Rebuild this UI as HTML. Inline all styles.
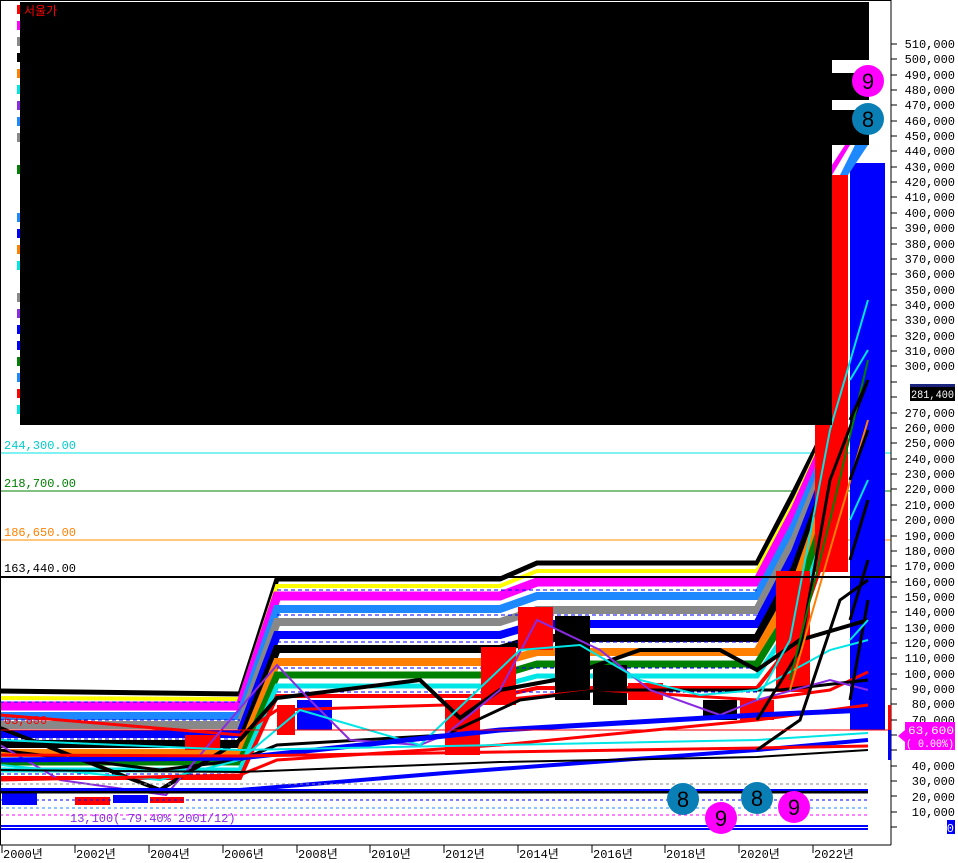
<!DOCTYPE html>
<html><head><meta charset="utf-8"><style>
html,body{margin:0;padding:0;background:#fff;width:958px;height:863px;overflow:hidden}
svg{display:block}
text{font-family:"Liberation Mono","Noto Sans CJK KR",monospace;font-size:12px}
.c{font-family:"Liberation Sans",sans-serif;font-size:22px;text-anchor:middle}
.s{font-size:11px}
</style></head><body>
<svg width="958" height="863" viewBox="0 0 958 863" xmlns="http://www.w3.org/2000/svg">
<rect width="958" height="863" fill="#fff"/>
<line x1="0" y1="453" x2="891" y2="453" stroke="#00e5e5" stroke-width="1"/>
<line x1="0" y1="491" x2="891" y2="491" stroke="#008000" stroke-width="1"/>
<line x1="0" y1="540" x2="891" y2="540" stroke="#ff8c00" stroke-width="1"/>
<text x="4" y="449" fill="#00cccc">244,300.00</text>
<text x="4" y="487" fill="#008000">218,700.00</text>
<text x="4" y="536" fill="#ff8000">186,650.00</text>
<text x="4" y="572" fill="#000">163,440.00</text>

<g fill="none" stroke-linejoin="miter">
<path d="M0,691 L240,694 L277,579 L500,579 L537,563 L757,563 L795,490 L830,420" stroke="#000" stroke-width="5"/>
<path d="M0,698 L240,699 L277,586 L500,586 L537,571 L757,571 L795,500 L830,425" stroke="#ffff00" stroke-width="4"/>
<path d="M0,706 L240,706 L277,596 L500,596 L537,582 L757,582 L795,510 L830,432" stroke="#ff00ff" stroke-width="9"/>
<path d="M0,716 L240,716 L277,609 L500,609 L537,596 L757,596 L795,524 L830,442" stroke="#1e88ff" stroke-width="8"/>
<path d="M0,725 L240,725 L277,622 L500,622 L537,610 L757,610 L795,538 L830,452" stroke="#888" stroke-width="8"/>
<path d="M0,734 L240,734 L277,635 L500,635 L537,624 L757,624 L795,552 L830,462" stroke="#0000ff" stroke-width="8"/>
<path d="M0,744 L240,744 L277,649 L500,649 L537,638 L757,638 L795,568 L830,472" stroke="#000" stroke-width="8"/>
<path d="M0,753 L240,753 L277,662 L500,662 L537,652 L757,652 L795,585 L830,485" stroke="#ff8000" stroke-width="8"/>
<path d="M0,762 L240,762 L277,675 L500,675 L537,664 L757,664 L795,603 L830,500" stroke="#008000" stroke-width="7"/>
<path d="M0,770 L240,770 L277,686 L500,686 L537,676 L757,676 L795,620 L830,520" stroke="#00e5e5" stroke-width="5"/>
<path d="M0,778 L240,778 L277,696 L500,696 L537,688 L757,688 L795,640 L830,540" stroke="#ff0000" stroke-width="4"/>
</g>
<g stroke="#0000ff" stroke-width="1" stroke-dasharray="4,3">
<line x1="0" y1="702" x2="240" y2="702"/><line x1="277" y1="590" x2="757" y2="590"/>
<line x1="0" y1="720" x2="240" y2="720"/><line x1="277" y1="615" x2="757" y2="615"/>
<line x1="0" y1="739" x2="240" y2="739"/><line x1="277" y1="642" x2="757" y2="642"/>
<line x1="0" y1="758" x2="240" y2="758"/><line x1="277" y1="668" x2="757" y2="668"/>
<line x1="0" y1="774" x2="240" y2="774"/><line x1="277" y1="692" x2="757" y2="692"/>
</g>
<g>
<rect x="2" y="790" width="35" height="15" fill="#0000ff"/>
<rect x="75" y="797" width="35" height="8" fill="#ff0000"/>
<rect x="113" y="795" width="35" height="8" fill="#0000ff"/>
<rect x="150" y="797" width="34" height="6" fill="#ff0000"/>
<rect x="185" y="735" width="35" height="15" fill="#ff0000"/>
<rect x="277" y="705" width="18" height="30" fill="#ff0000"/>
<rect x="297" y="700" width="35" height="30" fill="#0000ff"/>
<rect x="445" y="700" width="35" height="55" fill="#ff0000"/>
<rect x="481" y="647" width="35" height="58" fill="#ff0000"/>
<rect x="518" y="607" width="35" height="43" fill="#ff0000"/>
<rect x="555" y="616" width="35" height="84" fill="#000"/>
<rect x="593" y="665" width="34" height="40" fill="#000"/>
<rect x="628" y="683" width="35" height="17" fill="#ff0000"/>
<rect x="703" y="700" width="34" height="20" fill="#000"/>
<rect x="740" y="700" width="34" height="20" fill="#ff0000"/>
<rect x="776" y="571" width="34" height="121" fill="#ff0000"/>
<rect x="815" y="175" width="33" height="397" fill="#ff0000"/>
<rect x="850" y="163" width="35" height="567" fill="#0000ff"/>
</g>
<g fill="none">
<path d="M0,715 L240,735 L277,710 L445,705 L500,700 L600,690 L757,700 L830,690 L868,672" stroke="#ff0000" stroke-width="3"/>
<path d="M0,728 L160,790 L240,740 L277,698 L420,680 L460,718 L500,690 L555,680 L640,650 L720,650 L757,670 L800,640 L868,620" stroke="#000" stroke-width="4"/>
<path d="M0,750 L160,770 L240,760 L277,745 L445,735 L520,700 L600,690 L700,690 L780,690 L868,680" stroke="#000" stroke-width="3"/>
<path d="M0,745 L60,780 L166,795 L277,665 L310,700 L350,740 L420,745 L445,735 L500,690 L537,620 L600,650 L650,690 L720,715 L757,700 L830,680 L868,690" stroke="#8a2be2" stroke-width="2"/>
<path d="M0,765 L160,780 L240,760 L300,710 L420,745 L520,650 L580,645 L640,680 L700,695 L757,690 L830,650 L868,640" stroke="#00e5e5" stroke-width="2"/>
<path d="M0,780 L240,775 L277,760 L500,745 L757,720 L868,705" stroke="#ff0000" stroke-width="3"/>
<path d="M0,790 L240,790 L445,773 L757,750 L868,740" stroke="#0000ff" stroke-width="4"/>
<path d="M0,760 L240,758 L500,730 L757,715 L868,710" stroke="#0000ff" stroke-width="5"/>
<path d="M0,740 L240,750 L500,745 L757,740 L868,733" stroke="#00e5e5" stroke-width="2"/>
<path d="M0,755 L240,756 L500,752 L757,748 L868,746" stroke="#ff0000" stroke-width="3"/>
<path d="M0,770 L240,772 L500,762 L757,757 L868,750" stroke="#000" stroke-width="2"/>
<path d="M757,750 L800,720 L840,600 L868,580" stroke="#000" stroke-width="3"/>
<path d="M757,720 L800,650 L830,480 L868,380" stroke="#000" stroke-width="3"/>
<path d="M757,700 L790,640 L830,430 L868,300" stroke="#00e5e5" stroke-width="2"/>
<path d="M790,690 L830,550 L868,420" stroke="#ff8000" stroke-width="2"/>
<path d="M790,680 L830,520 L868,360" stroke="#008000" stroke-width="2"/>
<path d="M850,700 L868,600 M850,620 L868,560 M850,560 L868,500 M850,480 L868,430 M850,420 L868,380" stroke="#000" stroke-width="3"/>
<path d="M850,640 L868,620 M850,520 L868,480 M850,380 L868,350" stroke="#00e5e5" stroke-width="2"/>
</g>
<g stroke-width="1" stroke-dasharray="3,3">
<line x1="0" y1="800" x2="868" y2="800" stroke="#0000ff"/>
<line x1="0" y1="808" x2="868" y2="808" stroke="#1e88ff"/>
<line x1="0" y1="815" x2="868" y2="815" stroke="#ff00ff"/>
<line x1="0" y1="784" x2="868" y2="784" stroke="#888"/>
</g>
<line x1="0" y1="792" x2="868" y2="792" stroke="#000" stroke-width="3"/>
<line x1="0" y1="790" x2="868" y2="790" stroke="#0000ff" stroke-width="2"/>
<line x1="0" y1="826" x2="868" y2="826" stroke="#0000ff" stroke-width="2"/>
<line x1="0" y1="829" x2="868" y2="829" stroke="#0000ff" stroke-width="2"/>
<line x1="0" y1="577" x2="891" y2="577" stroke="#000" stroke-width="2"/>
<line x1="0" y1="730" x2="891" y2="730" stroke="#ff0000" stroke-width="1"/>
<text x="70" y="822" fill="#8a2be2">13,100(-79.40% 2001/12)</text>
<text x="4" y="724" fill="#ff0000">63,600</text>

<rect x="20" y="2" width="849" height="58" fill="#000"/>
<rect x="20" y="60" width="812" height="365" fill="#000"/>
<rect x="832" y="73" width="37" height="27" fill="#000"/>
<rect x="832" y="110" width="37" height="35" fill="#000"/>
<path d="M840,175 L855,145 L868,145 L848,175Z" fill="#1e88ff"/>
<path d="M832,165 L845,145 L850,145 L832,175Z" fill="#ff00ff"/>
<text x="24" y="15" fill="#ff0000">서울가</text>
<g>
<rect x="17" y="5" width="3" height="9" fill="#ff0000"/>
<rect x="17" y="21" width="3" height="9" fill="#ff00ff"/><rect x="17" y="37" width="3" height="9" fill="#888"/>
<rect x="17" y="53" width="3" height="9" fill="#000"/><rect x="17" y="69" width="3" height="9" fill="#ff8000"/>
<rect x="17" y="85" width="3" height="9" fill="#00e5e5"/><rect x="17" y="101" width="3" height="9" fill="#8a2be2"/>
<rect x="17" y="117" width="3" height="9" fill="#1e88ff"/><rect x="17" y="133" width="3" height="9" fill="#888"/>
<rect x="17" y="165" width="3" height="9" fill="#008000"/><rect x="17" y="213" width="3" height="9" fill="#1e88ff"/>
<rect x="17" y="229" width="3" height="9" fill="#0000ff"/><rect x="17" y="245" width="3" height="9" fill="#ff8000"/>
<rect x="17" y="261" width="3" height="9" fill="#00e5e5"/><rect x="17" y="293" width="3" height="9" fill="#888"/>
<rect x="17" y="309" width="3" height="9" fill="#8a2be2"/><rect x="17" y="325" width="3" height="9" fill="#0000ff"/>
<rect x="17" y="341" width="3" height="9" fill="#0000ff"/><rect x="17" y="357" width="3" height="9" fill="#008000"/>
<rect x="17" y="373" width="3" height="9" fill="#1e88ff"/><rect x="17" y="389" width="3" height="9" fill="#ff0000"/>
<rect x="17" y="405" width="3" height="9" fill="#00e5e5"/>
</g>

<circle cx="868" cy="81" r="16" fill="#ff00ff"/><text class="c" x="868" y="89">9</text>
<circle cx="868" cy="119" r="16" fill="#0a7fb5"/><text class="c" x="868" y="127">8</text>
<circle cx="683" cy="799" r="16" fill="#0a7fb5"/><text class="c" x="683" y="807">8</text>
<circle cx="721" cy="818" r="16" fill="#ff00ff"/><text class="c" x="721" y="826">9</text>
<circle cx="757" cy="798" r="16" fill="#0a7fb5"/><text class="c" x="757" y="806">8</text>
<circle cx="794" cy="807" r="16" fill="#ff00ff"/><text class="c" x="794" y="815">9</text>

<line x1="891" y1="0" x2="891" y2="845" stroke="#000"/>
<line x1="0" y1="845" x2="891" y2="845" stroke="#000"/>
<line x1="0.5" y1="0" x2="0.5" y2="845" stroke="#000"/>
<line x1="0" y1="0.5" x2="891" y2="0.5" stroke="#000"/>
<g fill="#000" text-anchor="end">
<text x="955" y="48">510,000</text><text x="955" y="63">500,000</text><text x="955" y="79">490,000</text><text x="955" y="94">480,000</text><text x="955" y="109">470,000</text><text x="955" y="125">460,000</text><text x="955" y="140">450,000</text><text x="955" y="155">440,000</text><text x="955" y="171">430,000</text><text x="955" y="186">420,000</text><text x="955" y="201">410,000</text><text x="955" y="217">400,000</text><text x="955" y="232">390,000</text><text x="955" y="248">380,000</text><text x="955" y="263">370,000</text><text x="955" y="278">360,000</text><text x="955" y="294">350,000</text><text x="955" y="309">340,000</text><text x="955" y="324">330,000</text><text x="955" y="340">320,000</text><text x="955" y="355">310,000</text><text x="955" y="370">300,000</text><text x="955" y="417">270,000</text><text x="955" y="432">260,000</text><text x="955" y="447">250,000</text><text x="955" y="463">240,000</text><text x="955" y="478">230,000</text><text x="955" y="493">220,000</text><text x="955" y="509">210,000</text><text x="955" y="524">200,000</text><text x="955" y="540">190,000</text><text x="955" y="555">180,000</text><text x="955" y="570">170,000</text><text x="955" y="586">160,000</text><text x="955" y="601">150,000</text><text x="955" y="616">140,000</text><text x="955" y="632">130,000</text><text x="955" y="647">120,000</text><text x="955" y="662">110,000</text><text x="955" y="678">100,000</text><text x="955" y="693">90,000</text><text x="955" y="708">80,000</text><text x="955" y="724">70,000</text><text x="955" y="770">40,000</text><text x="955" y="785">30,000</text><text x="955" y="801">20,000</text><text x="955" y="816">10,000</text>
</g>
<g stroke="#000">
<path d="M891,44h6M891,59h6M891,75h6M891,90h6M891,105h6M891,121h6M891,136h6M891,151h6M891,167h6M891,182h6M891,197h6M891,213h6M891,228h6M891,244h6M891,259h6M891,274h6M891,290h6M891,305h6M891,320h6M891,336h6M891,351h6M891,366h6M891,382h6M891,397h6M891,413h6M891,428h6M891,443h6M891,459h6M891,474h6M891,489h6M891,505h6M891,520h6M891,536h6M891,551h6M891,566h6M891,582h6M891,597h6M891,612h6M891,628h6M891,643h6M891,658h6M891,674h6M891,689h6M891,704h6M891,720h6M891,735h6M891,750h6M891,766h6M891,781h6M891,796h6M891,812h6M891,827h6"/>
</g>
<rect x="910" y="384" width="45" height="3" fill="#1a237e"/>
<rect x="910" y="387" width="45" height="14" fill="#000"/>
<text class="s" x="954" y="398" fill="#fff" text-anchor="end" textLength="43" lengthAdjust="spacingAndGlyphs">281,400</text>
<rect x="905" y="722" width="50" height="28" fill="#ff00ff"/>
<text class="s" x="954" y="734" fill="#fff" text-anchor="end" textLength="46" lengthAdjust="spacingAndGlyphs">63,600</text>
<text class="s" x="954" y="747" fill="#fff" text-anchor="end" textLength="48" lengthAdjust="spacingAndGlyphs">( 0.00%)</text>
<path d="M898,736 L905,730 L905,742Z" fill="#ff00ff"/>
<rect x="888" y="705" width="3" height="25" fill="#ff0000"/><rect x="888" y="730" width="3" height="30" fill="#0000ff"/>
<rect x="947" y="820" width="8" height="14" fill="#0000ff"/><text x="954" y="832" fill="#fff" text-anchor="end">0</text>
<g fill="#000">
<text x="3" y="858">2000년</text><text x="76" y="858">2002년</text><text x="150" y="858">2004년</text><text x="224" y="858">2006년</text><text x="298" y="858">2008년</text><text x="371" y="858">2010년</text><text x="445" y="858">2012년</text><text x="519" y="858">2014년</text><text x="593" y="858">2016년</text><text x="666" y="858">2018년</text><text x="740" y="858">2020년</text><text x="814" y="858">2022년</text>
</g>
<g stroke="#000"><path d="M2,845v8M75,845v8M149,845v8M223,845v8M297,845v8M370,845v8M444,845v8M518,845v8M592,845v8M665,845v8M739,845v8M813,845v8"/></g>
</svg>
</body></html>
